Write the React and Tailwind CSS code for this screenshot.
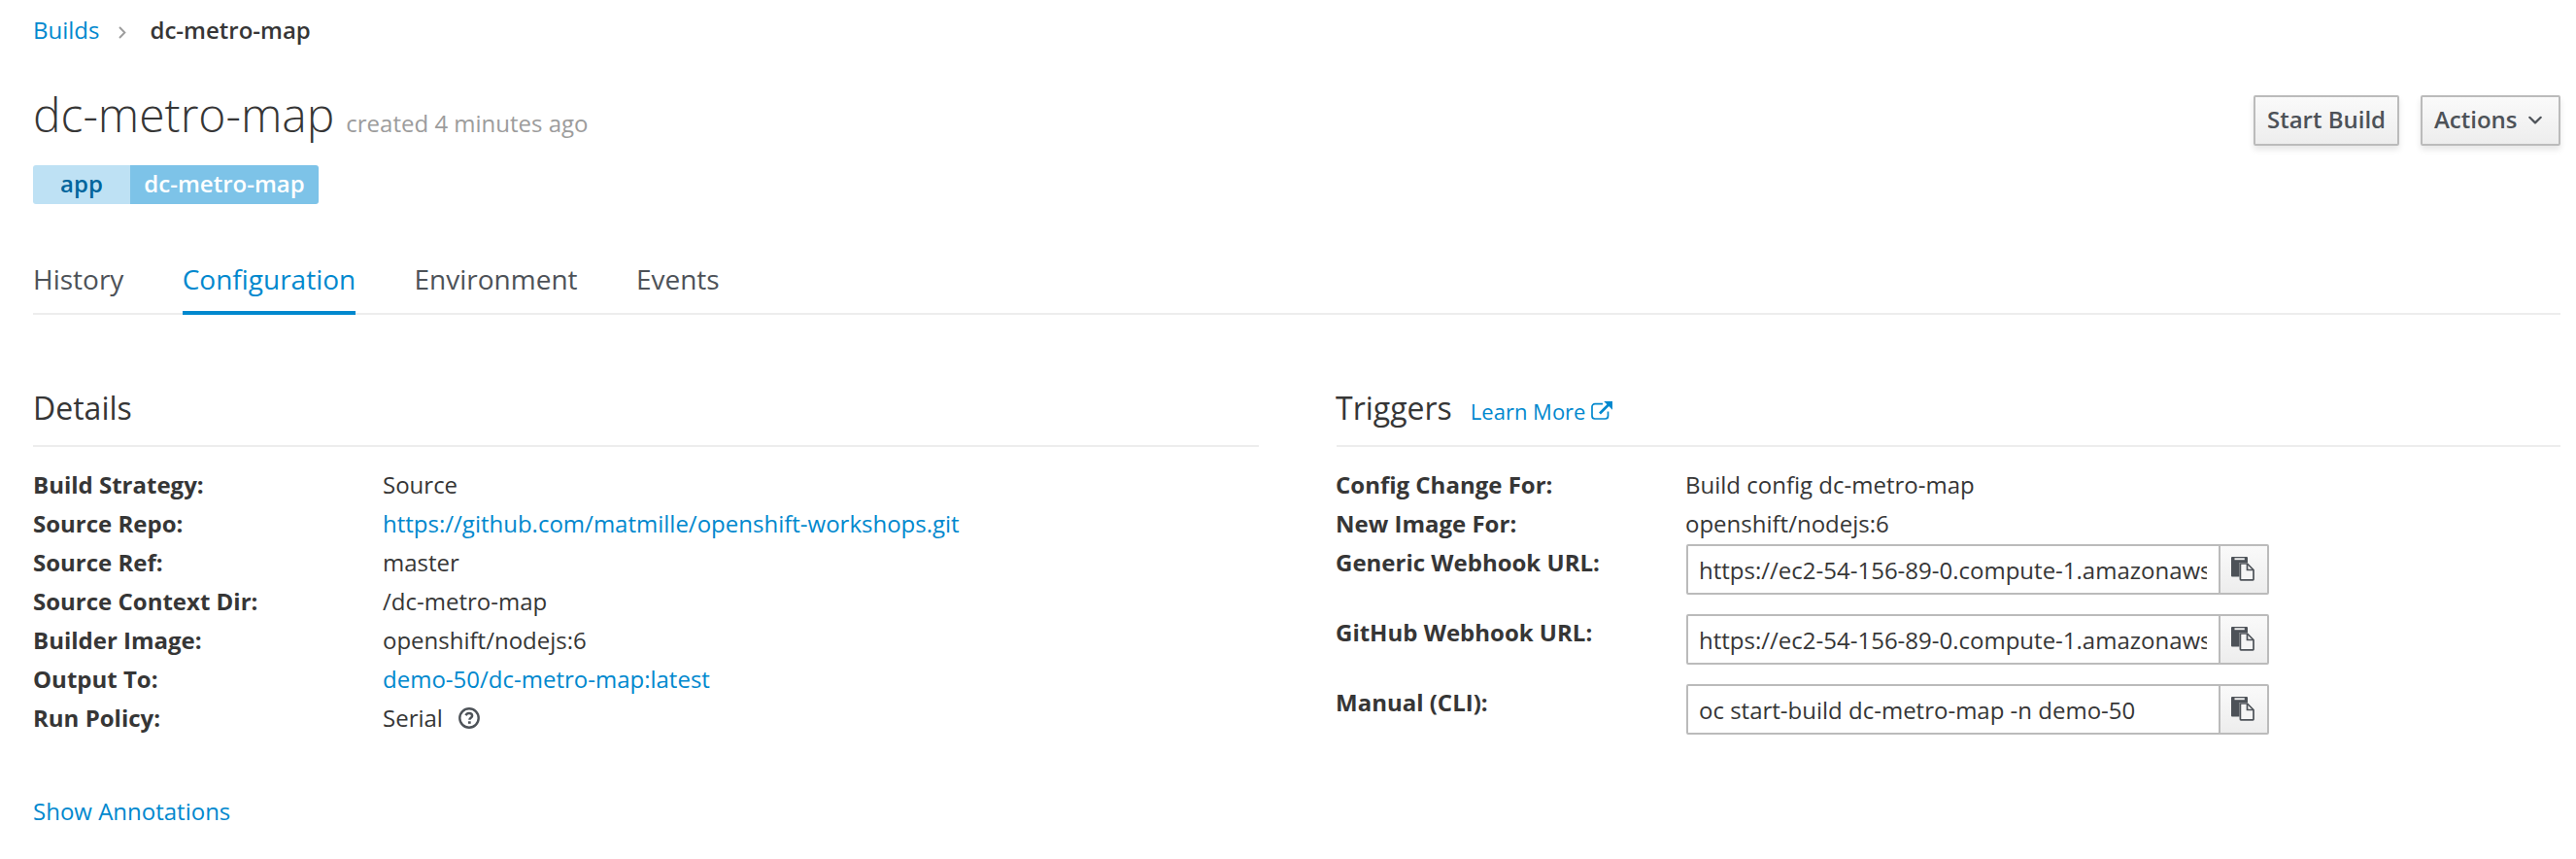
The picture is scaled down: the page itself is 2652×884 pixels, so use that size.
import React from "react";

const LINK = "text-[#0088ce]";

function ChevronRight() {
  return (
    <svg className="h-[13px] w-[8px]" viewBox="0 0 8 13" fill="none" stroke="#9c9c9c" strokeWidth="1.9">
      <path d="M1 1 6.4 6.5 1 12" />
    </svg>
  );
}

function ChevronDown() {
  return (
    <svg className="h-[10px] w-[14px]" viewBox="0 0 14 10" fill="none" stroke="#4d5258" strokeWidth="2.2" strokeLinecap="round" strokeLinejoin="round">
      <path d="M1.3 1.8 7 7.4l5.700-5.600" />
    </svg>
  );
}

function ExternalLink() {
  return (
    <svg className="h-[22px] w-[22px]" viewBox="0 0 22 22" fill="none" stroke="#0088ce" strokeWidth="1.7">
      <path d="M12 2.600H4A3 3 0 0 0 1 5.600V15a3 3 0 0 0 3 3h10.500a3 3 0 0 0 3-3v-4.500" />
      <path d="M9 12.500 18 3.500" strokeWidth="2.600" />
      <path d="M13.200 0H22v8.800Z" fill="#0088ce" stroke="none" />
    </svg>
  );
}

function PasteIcon() {
  return (
    <svg className="h-[25px] w-[24px]" viewBox="0 0 24 25">
      <path d="M1 0h15a1 1 0 0 1 1 1v5H8.500v14.500H1a1 1 0 0 1-1-1V1a1 1 0 0 1 1-1Z" fill="#4d5258" />
      <path d="M3.500 1.300h10.300v1.900H3.500Z" fill="#f5f5f5" />
      <path d="M9.400 7h7.100l6.500 6.500v9.700a.6.6 0 0 1-.6.6H10a.6.6 0 0 1-.6-.6Z" fill="#f5f5f5" stroke="#4d5258" strokeWidth="1.700" />
      <path d="M16.500 7v6.500H23" fill="none" stroke="#4d5258" strokeWidth="1.700" />
    </svg>
  );
}

function HelpIcon() {
  return (
    <svg className="h-[22px] w-[22px]" viewBox="0 0 22 22" fill="none" stroke="#4d5258">
      <circle cx="11" cy="11" r="9.700" strokeWidth="2.400" />
      <path d="M7.600 8.300C8.200 6.700 9.400 6.100 10.900 6.100c1.900 0 3.200 1 3.200 2.600 0 2-2.700 2.100-2.700 4" strokeWidth="2.500" />
      <path d="M9.900 14.300h2.800v2.500H9.900Z" fill="#4d5258" stroke="none" />
    </svg>
  );
}

function Row({ label, children }) {
  return (
    <div className="flex h-10">
      <dt className="w-[360px] shrink-0 font-bold">{label}</dt>
      <dd className="flex items-center whitespace-nowrap">{children}</dd>
    </div>
  );
}

function CopyRow({ label, value }) {
  return (
    <div className="flex h-[72px]">
      <dt className="w-[360px] shrink-0 font-bold">{label}</dt>
      <dd className="ml-px mt-px flex h-[52px] w-[600px] rounded-[2px] border-2 border-[#bbb]">
        <div className="flex-1 overflow-hidden pl-[11px] pr-3">
          <div className="overflow-hidden whitespace-nowrap leading-[50px]">{value}</div>
        </div>
        <button className="flex w-[50px] shrink-0 border-l-2 border-[#bbb] bg-linear-to-b from-[#fafafa] to-[#ededed] pl-[11px] pt-[11px]">
          <PasteIcon />
        </button>
      </dd>
    </div>
  );
}

const BUTTON =
  "flex h-[52px] items-center rounded-[2px] border-2 border-[#bbb] bg-linear-to-b from-[#fafafa] to-[#ededed] pb-[2px] font-semibold text-[#4d5258] shadow-[0_4px_6px_rgba(3,3,3,0.1)]";

export default function App() {
  return (
    <main className="h-[884px] w-[2652px] overflow-hidden bg-white pl-[34px] pr-4 pt-[11px] font-['Open_Sans',sans-serif] text-[24px] leading-10 text-[#363636]">
      <nav className="flex h-10 items-center">
        <a className={LINK}>Builds</a>
        <span className="ml-5 mr-6 mt-1"><ChevronRight /></span>
        <span className="font-semibold">dc-metro-map</span>
      </nav>

      <header className="mt-10 flex h-[79px] items-start justify-between">
        <h1 className="flex items-baseline text-[48px] font-light leading-[54px]">
          dc-metro-map
          <small className="ml-3 text-[24px] font-normal text-[#9c9c9c]">created 4 minutes ago</small>
        </h1>
        <div className="mt-[7px] flex gap-[22px]">
          <button className={BUTTON + " w-[150px] justify-center"}>Start Build</button>
          <button className={BUTTON + " w-[144px] gap-[11px] pl-3"}>
            Actions
            <span className="mt-[2px]"><ChevronDown /></span>
          </button>
        </div>
      </header>

      <div className="flex h-10 w-max overflow-hidden rounded-[3px] font-semibold leading-[37px]">
        <span className="w-[100px] bg-[#bee1f4] text-center text-[#00659c]">app</span>
        <span className="w-[194px] bg-[#7dc3e8] text-center text-white">dc-metro-map</span>
      </div>

      <div className="mt-14 flex h-[58px] gap-[60.3px] border-b-2 border-[#ededed] text-[28px] leading-[42px] text-[#4d5258]">
        <span>History</span>
        <span className="h-[58px] border-b-4 border-[#0088ce] text-[#0088ce]">Configuration</span>
        <span>Environment</span>
        <span>Events</span>
      </div>

      <div className="mt-[76px] grid grid-cols-[1262px_1260px] gap-20">
        <section>
          <div className="h-[60px] border-b-2 border-[#ededed]">
            <h2 className="text-[32px]">Details</h2>
          </div>
          <dl className="mt-[19px]">
            <Row label="Build Strategy:">Source</Row>
            <Row label="Source Repo:"><a className={LINK}>https://github.com/matmille/openshift-workshops.git</a></Row>
            <Row label="Source Ref:">master</Row>
            <Row label="Source Context Dir:">/dc-metro-map</Row>
            <Row label="Builder Image:">openshift/nodejs:6</Row>
            <Row label="Output To:"><a className={LINK}>demo-50/dc-metro-map:latest</a></Row>
            <Row label="Run Policy:">
              Serial
              <span className="ml-4"><HelpIcon /></span>
            </Row>
          </dl>
          <a className={LINK + " mt-14 block"}>Show Annotations</a>
        </section>

        <section>
          <div className="h-[60px] border-b-2 border-[#ededed]">
            <h2 className="-ml-px flex items-baseline text-[32px]">
              Triggers
              <a className={LINK + " ml-[19px] flex text-[22px]"}>
                Learn More
                <span className="ml-[6px] mt-[10px]"><ExternalLink /></span>
              </a>
            </h2>
          </div>
          <dl className="-ml-px mt-[19px]">
            <Row label="Config Change For:">Build config dc-metro-map</Row>
            <Row label="New Image For:">openshift/nodejs:6</Row>
            <CopyRow label="Generic Webhook URL:" value="https://ec2-54-156-89-0.compute-1.amazonaws.com" />
            <CopyRow label="GitHub Webhook URL:" value="https://ec2-54-156-89-0.compute-1.amazonaws.com" />
            <CopyRow label="Manual (CLI):" value="oc start-build dc-metro-map -n demo-50" />
          </dl>
        </section>
      </div>
    </main>
  );
}
